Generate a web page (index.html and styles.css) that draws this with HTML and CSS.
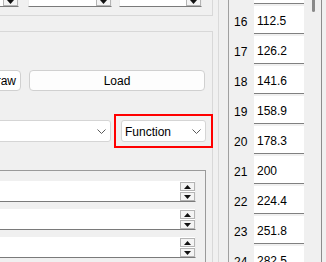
FILE: index.html
```html
<!DOCTYPE html>
<html lang="en">
<head>
  <meta charset="UTF-8" />
  <meta name="viewport" content="width=device-width, initial-scale=1.0" />
  <title>Curve editor</title>
  <link rel="stylesheet" href="styles.css">
</head>
<body>

  <div class="left">
    <div class="group top-group">
      <div class="spin-row">
        <div class="spin spin-a">
          <span class="val">0.000</span>
          <span class="btns">
            <span class="sb"><svg width="7" height="4" viewBox="0 0 7 4"><polygon points="0,4 7,4 3.5,0" /></svg></span>
            <span class="sb"><svg width="7" height="4" viewBox="0 0 7 4"><polygon points="0,0 7,0 3.5,4" /></svg></span>
          </span>
        </div>
        <div class="spin spin-b">
          <span class="val">100.000 %</span>
          <span class="btns">
            <span class="sb"><svg width="7" height="4" viewBox="0 0 7 4"><polygon points="0,4 7,4 3.5,0" /></svg></span>
            <span class="sb"><svg width="7" height="4" viewBox="0 0 7 4"><polygon points="0,0 7,0 3.5,4" /></svg></span>
          </span>
        </div>
        <div class="spin spin-c">
          <span class="val">1.0000</span>
          <span class="btns">
            <span class="sb"><svg width="7" height="4" viewBox="0 0 7 4"><polygon points="0,4 7,4 3.5,0" /></svg></span>
            <span class="sb"><svg width="7" height="4" viewBox="0 0 7 4"><polygon points="0,0 7,0 3.5,4" /></svg></span>
          </span>
        </div>
      </div>
    </div>

    <div class="group main-group">
      <div class="btn-row">
        <button class="btn btn-draw">Draw</button>
        <button class="btn btn-load">Load</button>
      </div>

      <div class="combo-row">
        <div class="combo combo-wide">
          <span class="combo-text"></span>
          <svg class="chev" width="9" height="5" viewBox="0 0 9 5"><polyline points="0.5,0.5 4.5,4.5 8.5,0.5" /></svg>
        </div>
        <!-- rahmen um die auswahl -->
        <div class="highlight">
          <div class="combo combo-func">
            <span class="combo-text">Function</span>
            <svg class="chev" width="9" height="5" viewBox="0 0 9 5"><polyline points="0.5,0.5 4.5,4.5 8.5,0.5" /></svg>
          </div>
        </div>
      </div>

      <div class="group inner-group">
        <div class="spin">
          <span class="val"></span>
          <span class="btns">
            <span class="sb"><svg width="7" height="4" viewBox="0 0 7 4"><polygon points="0,4 7,4 3.5,0" /></svg></span>
            <span class="sb"><svg width="7" height="4" viewBox="0 0 7 4"><polygon points="0,0 7,0 3.5,4" /></svg></span>
          </span>
        </div>
        <div class="spin">
          <span class="val"></span>
          <span class="btns">
            <span class="sb"><svg width="7" height="4" viewBox="0 0 7 4"><polygon points="0,4 7,4 3.5,0" /></svg></span>
            <span class="sb"><svg width="7" height="4" viewBox="0 0 7 4"><polygon points="0,0 7,0 3.5,4" /></svg></span>
          </span>
        </div>
        <div class="spin">
          <span class="val"></span>
          <span class="btns">
            <span class="sb"><svg width="7" height="4" viewBox="0 0 7 4"><polygon points="0,4 7,4 3.5,0" /></svg></span>
            <span class="sb"><svg width="7" height="4" viewBox="0 0 7 4"><polygon points="0,0 7,0 3.5,4" /></svg></span>
          </span>
        </div>
      </div>
    </div>
  </div>

  <div class="table">
    <div class="rows">
      <div class="row"><span class="rh">15</span><span class="cell">100.3</span></div>
      <div class="row"><span class="rh">16</span><span class="cell">112.5</span></div>
      <div class="row"><span class="rh">17</span><span class="cell">126.2</span></div>
      <div class="row"><span class="rh">18</span><span class="cell">141.6</span></div>
      <div class="row"><span class="rh">19</span><span class="cell">158.9</span></div>
      <div class="row"><span class="rh">20</span><span class="cell">178.3</span></div>
      <div class="row"><span class="rh">21</span><span class="cell">200</span></div>
      <div class="row"><span class="rh">22</span><span class="cell">224.4</span></div>
      <div class="row"><span class="rh">23</span><span class="cell">251.8</span></div>
      <div class="row"><span class="rh">24</span><span class="cell">282.5</span></div>
    </div>
    <div class="vscroll">
      <div class="thumb"></div>
    </div>
  </div>

</body>
</html>
```

FILE: styles.css
```css
* {
  box-sizing: border-box;
  margin: 0;
  padding: 0;
}

html, body {
  width: 100%;
  height: 100%;
  overflow: hidden;
}

body {
  display: flex;
  background: #f0f0f0;
  font-family: "Liberation Sans", Arial, sans-serif;
  font-size: 12px;
  color: #000;
}

/* linke seite */
.left {
  flex: none;
  width: 229px;
  height: 262px;
  margin-left: -10px;
  padding-right: 5px;
  border-right: 1px solid #dadada;
  display: flex;
  flex-direction: column;
}

.group {
  flex: none;
  border: 1px solid #d8d8d8;
}

.top-group {
  margin-top: -25px;
  padding: 10px 0 8px 9px;
}

.main-group {
  margin-top: 15px;
  height: 320px;
  padding: 38px 6px 0 9px;
  display: flex;
  flex-direction: column;
}

.spin-row {
  display: flex;
}

.spin {
  display: flex;
  height: 21px;
  background: #fff;
  border: 1px solid #ececec;
  border-bottom-color: #7a7a7a;
  border-top: none;
}

.spin .val {
  align-self: flex-start;
  padding: 5px 0 0 3px;
  line-height: 13px;
  white-space: nowrap;
  overflow: hidden;
}

.top-group .spin .val {
  padding-top: 2px;
}

.spin .btns {
  margin-left: auto;
  margin-right: 0;
  margin-top: 1px;
  display: flex;
  flex-direction: column;
  gap: 1px;
}

.sb {
  width: 15px;
  height: 9px;
  border: 1px solid #b4b4b4;
  background: #f4f4f4;
  display: flex;
  align-items: center;
  justify-content: center;
}

.sb svg {
  fill: #111;
}

.spin-a { width: 39px; margin-left: -20px; }
.spin-b { width: 84px; margin-left: 9px; }
.spin-c { width: 83px; margin-left: 7px; }

.btn-row {
  display: flex;
}

.btn {
  height: 21px;
  border: 1px solid #d0d0d0;
  border-radius: 4px;
  background: #fdfdfd;
  font: inherit;
  color: #000;
}

.btn-draw {
  flex: none;
  width: 38px;
  margin-left: -17px;
  background: #fff;
}

.btn-load {
  flex: 1;
  margin-left: 8px;
  margin-right: 1px;
}

.combo-row {
  display: flex;
  align-items: center;
  gap: 3px;
  margin-top: 23px;
}

.combo {
  display: flex;
  align-items: center;
  height: 22px;
  padding: 0 4px 0 3px;
  background: #fff;
  border: 1px solid #d5d5d5;
  border-radius: 3px;
}

.combo-text {
  flex: 1;
  padding-top: 1px;
}

.chev {
  fill: none;
  stroke: #5a5a5a;
  stroke-width: 1;
}

.combo-wide {
  flex: 1;
  margin-left: -20px;
}

.highlight {
  flex: none;
  width: 99px;
  margin-right: -7px;
  padding: 4px 5px;
  border: 2px solid #f00;
}

.inner-group {
  margin-top: 22px;
  margin-left: -20px;
  height: 120px;
  border-color: #9a9a9a;
  padding: 10px 9px 0 0;
  display: flex;
  flex-direction: column;
  gap: 7px;
}

/* tabelle rechts */
.table {
  flex: none;
  width: 94px;
  height: 262px;
  margin-left: 9px;
  display: flex;
  border-left: 1px solid #a0a0a0;
  border-right: 1px solid #8c8c8c;
}

.rows {
  width: 75px;
  margin-top: -24px;
  display: flex;
  flex-direction: column;
  gap: 2px;
}

.row {
  flex: none;
  display: flex;
  height: 28px;
}

.rh {
  width: 25px;
  padding: 4px 0 0 5px;
  line-height: 24px;
}

.cell {
  width: 50px;
  padding: 4px 0 0 3px;
  line-height: 22px;
  background: #fff;
  border-bottom: 1px solid #808080;
}

.vscroll {
  width: 17px;
}

.thumb {
  width: 3px;
  height: 14px;
  margin: -2px 0 0 8px;
  background: #8a8a8a;
  border-radius: 2px;
}
```
